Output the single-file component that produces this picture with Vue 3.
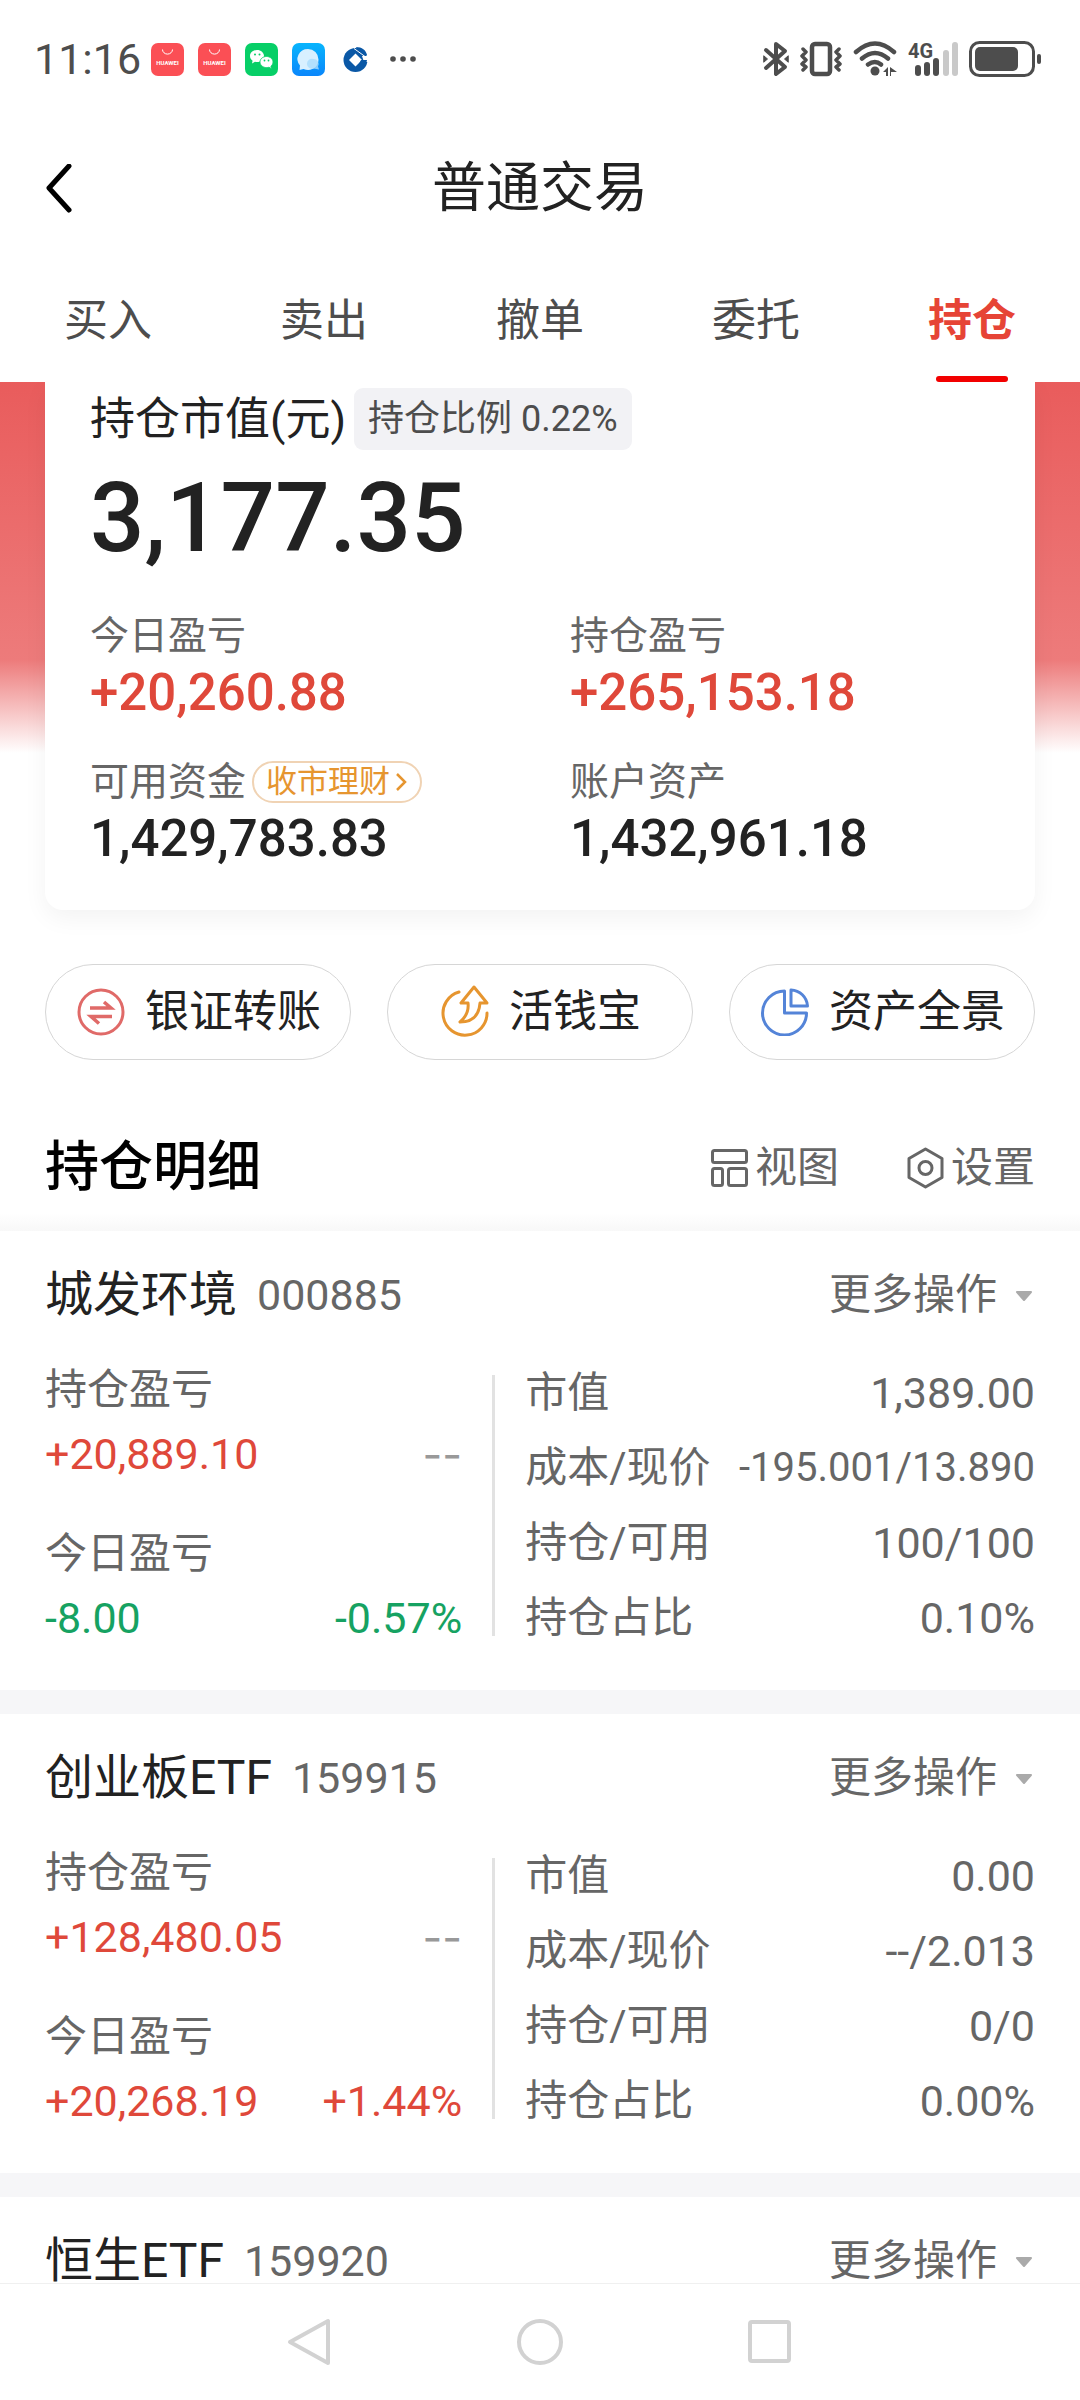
<template>
    <div class="page">
        <header class="header">
            <div class="status">
                <span class="status-time">11:16</span>
                <div class="status-apps">
                    <svg v-for="n in 2" :key="n" class="app-icon" viewBox="0 0 33 33">
                        <rect width="33" height="33" rx="7" fill="#fb4f55" />
                        <path d="M11.5 6.5a5 4.6 0 0 0 10 0" fill="none" stroke="#fff" stroke-width="1" />
                        <text x="16.5" y="21.5" text-anchor="middle" font-size="6" font-weight="700" fill="#fff">HUAWEI</text>
                    </svg>
                    <svg class="app-icon" viewBox="0 0 33 33">
                        <rect width="33" height="33" rx="7" fill="#07cf67" />
                        <path d="M12 7c-4 0-7 2.700-7 6 0 2 1 3.600 2.600 4.700L7 20.500l3-1.700c5 1 9-1.500 9-5.800 0-3.300-3-6-7-6z" fill="#fff" />
                        <path d="M21.500 13.500c-3.700 0-6.500 2.400-6.500 5.500s3 5.600 6.500 5.600c.9 0 1.700-.1 2.500-.4l2.400 1.500-.5-2.500c1.300-1 2.100-2.500 2.100-4.200 0-3.100-2.900-5.500-6.500-5.500z" fill="#fff" stroke="#07cf67" stroke-width="0.800" />
                        <g fill="#07cf67">
                            <circle cx="10" cy="11.500" r="1" />
                            <circle cx="14.500" cy="11.500" r="1" />
                            <circle cx="19.500" cy="17.500" r="0.900" />
                            <circle cx="23.500" cy="17.500" r="0.900" />
                        </g>
                    </svg>
                    <svg class="app-icon" viewBox="0 0 33 33">
                        <defs>
                            <linearGradient id="msgBg" x1="0" y1="0" x2="0" y2="1">
                                <stop offset="0" stop-color="#08b5fd" />
                                <stop offset="1" stop-color="#0a86fb" />
                            </linearGradient>
                        </defs>
                        <rect width="33" height="33" rx="7" fill="url(#msgBg)" />
                        <path d="M16 6a10.500 10 0 0 0-8 16.500l-.5 4.500 4-1c8 3 15-2 15-9.500a10.500 10.500 0 0 0-10.500-10.500z" fill="#d8f0ff" />
                        <path d="M21.500 16a5 5 0 1 0 0 9.500l5.500 1-1-3a5 5 0 0 0-4.500-7.500z" fill="#a9dcfd" opacity="0.800" />
                    </svg>
                    <svg class="app-icon" viewBox="0 0 33 33">
                        <circle cx="16.500" cy="17" r="12" fill="#0a58a6" />
                        <path d="M23 13h10v6h-8z" fill="#fff" />
                        <path d="M16.500 10.500l6.500 6.500-6.500 6.500-6.500-6.500z" fill="#fff" />
                        <path d="M17 4c6 0 10 3 11 8h-5l-4-4zM22 17h6l-1 4h-7z" fill="#0a58a6" />
                        <path d="M15 5.500l11 8" stroke="#fff" stroke-width="1" />
                    </svg>
                    <svg class="app-icon" viewBox="0 0 33 33" fill="#4d4d4d">
                        <circle cx="7" cy="16" r="2.800" />
                        <circle cx="17" cy="16" r="2.800" />
                        <circle cx="27" cy="16" r="2.800" />
                    </svg>
                </div>
                <div class="status-system">
                    <svg width="26" height="36" viewBox="0 0 26 36" fill="none" stroke="#4d4d4d" stroke-width="4" stroke-linejoin="round" stroke-linecap="round">
                        <path d="M3 9l19 17-9 7V3l9 7L3 27" />
                        <path d="M1 15l3.500 3-3.500 3zM25 15l-3.500 3 3.500 3z" stroke-width="1" fill="#4d4d4d" />
                    </svg>
                    <svg width="42" height="36" viewBox="0 0 42 36" fill="none" stroke="#4d4d4d" stroke-width="4.500" stroke-linejoin="round" stroke-linecap="round">
                        <rect x="12" y="3" width="18" height="30" rx="3" />
                        <path d="M3 8l3 3-4 4 4 4-4 4 4 3-3 3M39 8l-3 3 4 4-4 4 4 4-4 3 3 3" stroke-width="3.500" />
                    </svg>
                    <svg width="44" height="36" viewBox="0 0 44 36" fill="none" stroke="#4d4d4d" stroke-width="4.500" stroke-linecap="round">
                        <path d="M3 11q19-17 38 0M9 17.500q13-11 26 0M15 23.500q7-5 13 0" />
                        <circle cx="22" cy="30" r="4.500" fill="#4d4d4d" stroke="none" />
                        <path d="M30 31l5-5v9h-2v-4zM37 26v9h1v-4h6z" fill="#4d4d4d" stroke="none" />
                    </svg>
                    <svg class="signal" width="50" height="36" viewBox="0 0 50 36" fill="#4d4d4d">
                        <text x="0" y="17" font-size="20" font-weight="700">4G</text>
                        <rect x="7" y="24" width="6" height="11" rx="3" />
                        <rect x="16" y="21" width="6" height="14" rx="3" />
                        <rect x="25" y="17" width="6" height="18" rx="3" />
                        <rect x="35" y="9" width="6" height="26" rx="3" fill="#c9c9c9" />
                        <rect x="44" y="1" width="6" height="34" rx="3" fill="#c9c9c9" />
                    </svg>
                    <svg width="73" height="36" viewBox="0 0 73 36">
                        <rect x="1.500" y="1.500" width="63" height="33" rx="9" fill="none" stroke="#4d4d4d" stroke-width="3" />
                        <rect x="6" y="6" width="43" height="24" rx="5" fill="#4d4d4d" />
                        <rect x="68" y="13" width="4" height="10" rx="2" fill="#4d4d4d" />
                    </svg>
                </div>
            </div>
            <div class="title-bar">
                <button class="back" type="button" aria-label="返回">
                    <svg width="28" height="50" viewBox="0 0 28 50" fill="none" stroke="#000" stroke-width="5" stroke-linecap="round" stroke-linejoin="round">
                        <path d="M24 2L4 24l20 22" />
                    </svg>
                </button>
                <h1 class="title">普通交易</h1>
            </div>
            <nav class="tabs">
                <button v-for="tab in tabs" :key="tab" type="button" class="tab" :class="{ active: tab === activeTab }"
                    @click="activeTab = tab">{{ tab }}</button>
            </nav>
        </header>

        <main class="content">
            <section class="hero">
                <div class="summary">
                    <div class="summary-head">
                        <span class="summary-title">持仓市值(元)</span>
                        <span class="ratio">持仓比例 0.22%</span>
                    </div>
                    <div class="total">3,177.35</div>
                    <dl class="stats">
                        <div v-for="stat in stats" :key="stat.label">
                            <dt class="stat-label">
                                {{ stat.label }}
                                <a v-if="stat.link" class="badge" href="#">{{ stat.link }}
                                    <svg width="12" height="20" viewBox="0 0 12 20" fill="none" stroke="currentColor" stroke-width="2.500">
                                        <path d="M1 2l8 8-8 8" />
                                    </svg>
                                </a>
                            </dt>
                            <dd class="stat-value" :class="trend(stat.value)">{{ stat.value }}</dd>
                        </div>
                    </dl>
                </div>
            </section>

            <section class="actions">
                <button class="action" type="button">
                    <svg width="48" height="48" viewBox="0 0 48 48" fill="none" stroke="#e06a68" stroke-width="3">
                        <circle cx="24" cy="24" r="22" />
                        <path d="M13 20h21l-7-6M35 28.500H14l8 7" stroke-width="3.500" />
                    </svg>
                    <span>银证转账</span>
                </button>
                <button class="action" type="button">
                    <svg width="48" height="54" viewBox="0 0 48 54" fill="none" stroke="#e6952f" stroke-width="3" stroke-linecap="round" stroke-linejoin="round">
                        <path d="M18 7a22 22 0 1 0 28 21" />
                        <path d="M33 2L20 18h7c1 8-2 14-8 19 12 0 19-6 20-19h7z" />
                    </svg>
                    <span>活钱宝</span>
                </button>
                <button class="action" type="button">
                    <svg width="48" height="48" viewBox="0 0 48 48" fill="none" stroke="#5484d8" stroke-width="3" stroke-linejoin="round">
                        <path d="M23.500 3a22 22 0 1 0 22 22h-22z" />
                        <path d="M30 2v16h16.500A17 17 0 0 0 30 2z" />
                    </svg>
                    <span>资产全景</span>
                </button>
            </section>

            <section class="detail-head">
                <h2 class="detail-title">持仓明细</h2>
                <button class="tool" type="button">
                    <svg width="37" height="40" viewBox="0 0 37 40" fill="none" stroke="#666" stroke-width="3">
                        <rect x="1.500" y="2.500" width="34" height="12" rx="2" />
                        <rect x="1.500" y="20.500" width="10" height="17" rx="2" />
                        <rect x="17.500" y="20.500" width="18" height="17" rx="2" />
                    </svg>
                    <span>视图</span>
                </button>
                <button class="tool" type="button">
                    <svg width="37" height="42" viewBox="0 0 37 42" fill="none" stroke="#666" stroke-width="3" stroke-linejoin="round">
                        <path d="M18.500 2l16.500 9.500v19L18.500 40 2 30.500v-19z" />
                        <circle cx="18.500" cy="21" r="6.500" />
                    </svg>
                    <span>设置</span>
                </button>
            </section>

            <article v-for="item in holdings" :key="item.code" class="holding">
                <div class="holding-head">
                    <h3 class="name">{{ item.name }}</h3>
                    <span class="code">{{ item.code }}</span>
                    <button class="more" type="button">
                        <span>更多操作</span>
                        <svg width="20" height="16" viewBox="0 0 20 16">
                            <path d="M2 5h14l-7 8z" fill="#aaa" stroke="#aaa" stroke-width="2" stroke-linejoin="round" />
                        </svg>
                    </button>
                </div>
                <div v-if="item.rows" class="holding-body">
                    <dl class="profit">
                        <template v-for="p in item.profit" :key="p.label">
                            <dt>{{ p.label }}</dt>
                            <dd :class="trend(p.value)">
                                <span>{{ p.value }}</span>
                                <span :class="{ empty: p.rate === '--' }">{{ p.rate }}</span>
                            </dd>
                        </template>
                    </dl>
                    <div class="divider"></div>
                    <dl class="rows">
                        <div v-for="row in item.rows" :key="row.label" class="row">
                            <dt>{{ row.label }}</dt>
                            <dd :class="{ long: row.value.length > 12 }">{{ row.value }}</dd>
                        </div>
                    </dl>
                </div>
            </article>
        </main>

        <footer class="nav">
            <button type="button" aria-label="返回">
                <svg width="48" height="48" viewBox="0 0 48 48"><path d="M42 3v42L4 24z" /></svg>
            </button>
            <button type="button" aria-label="主页">
                <svg width="48" height="48" viewBox="0 0 48 48"><circle cx="24" cy="24" r="21" /></svg>
            </button>
            <button type="button" aria-label="最近任务">
                <svg width="48" height="48" viewBox="0 0 48 48"><rect x="4" y="4" width="39" height="39" rx="2" /></svg>
            </button>
        </footer>
    </div>
</template>

<script setup>
import { ref } from 'vue';

const tabs = ['买入', '卖出', '撤单', '委托', '持仓'];
const activeTab = ref('持仓');

const stats = [
    { label: '今日盈亏', value: '+20,260.88' },
    { label: '持仓盈亏', value: '+265,153.18' },
    { label: '可用资金', value: '1,429,783.83', link: '收市理财' },
    { label: '账户资产', value: '1,432,961.18' }
];

const holdings = [
    {
        name: '城发环境',
        code: '000885',
        profit: [
            { label: '持仓盈亏', value: '+20,889.10', rate: '--' },
            { label: '今日盈亏', value: '-8.00', rate: '-0.57%' }
        ],
        rows: [
            { label: '市值', value: '1,389.00' },
            { label: '成本/现价', value: '-195.001/13.890' },
            { label: '持仓/可用', value: '100/100' },
            { label: '持仓占比', value: '0.10%' }
        ]
    },
    {
        name: '创业板ETF',
        code: '159915',
        profit: [
            { label: '持仓盈亏', value: '+128,480.05', rate: '--' },
            { label: '今日盈亏', value: '+20,268.19', rate: '+1.44%' }
        ],
        rows: [
            { label: '市值', value: '0.00' },
            { label: '成本/现价', value: '--/2.013' },
            { label: '持仓/可用', value: '0/0' },
            { label: '持仓占比', value: '0.00%' }
        ]
    },
    { name: '恒生ETF', code: '159920' }
];

// red for gains, green for losses
function trend(value) {
    if (value.startsWith('+')) return 'up';
    if (value.startsWith('-')) return 'down';
    return '';
}
</script>

<style>
body {
    margin: 0;
    background: #fff;
}
</style>

<style scoped>
.page {
    display: flex;
    flex-direction: column;
    height: 100vh;
    overflow: hidden;
    color: #222;
    font-family: Roboto, "Noto Sans CJK SC", sans-serif;
    font-size: 42px;
    line-height: 1;
}

button {
    padding: 0;
    border: 0;
    background: none;
    color: inherit;
    font: inherit;
    cursor: pointer;
}

h1,
h2,
h3,
dl,
dd {
    margin: 0;
}

svg {
    display: block;
    flex: none;
}

.header {
    flex: none;
}

.status {
    display: flex;
    align-items: center;
    height: 118px;
    padding: 0 38px 0 34px;
    color: #4d4d4d;
}

.status-time {
    font-size: 43px;
}

.status-apps {
    display: flex;
    gap: 14px;
    margin-left: 10px;
}

.app-icon {
    width: 33px;
    height: 33px;
}

.status-system {
    display: flex;
    align-items: center;
    gap: 11px;
    margin-left: auto;
}

.signal {
    overflow: visible;
}

.title-bar {
    display: grid;
    grid-template-columns: 1fr auto 1fr;
    align-items: center;
    height: 142px;
    padding: 0 45px;
}

.back {
    justify-self: start;
}

.title {
    font-size: 54px;
    font-weight: 400;
}

.tabs {
    display: flex;
    height: 122px;
}

.tab {
    position: relative;
    flex: 1;
    color: #4d4d4d;
    font-size: 44px;
}

.tab.active {
    color: #e64436;
    font-weight: 700;
}

.tab.active::after {
    content: '';
    position: absolute;
    bottom: 0;
    left: 50%;
    width: 72px;
    height: 6px;
    margin-left: -36px;
    border-radius: 3px;
    background: #f20000;
}

.content {
    flex: 1;
    min-height: 0;
    overflow: hidden;
}

.hero {
    padding: 0 45px;
    background: linear-gradient(#e95c5c, #ed7b7b 278px, #fff 371px);
}

.summary {
    padding: 6px 45px 38px;
    border-radius: 0 0 18px 18px;
    background: #fff;
    box-shadow: 0 8px 24px rgba(0, 0, 0, 0.05);
}

.summary-head {
    display: flex;
    align-items: center;
    gap: 8px;
    height: 62px;
}

.summary-title {
    font-size: 45px;
}

.ratio {
    padding: 0 14px;
    border-radius: 9px;
    background: #f2f2f5;
    color: #4d4d4d;
    font-size: 36px;
    line-height: 62px;
}

.total {
    margin-top: 18px;
    font-size: 96px;
    font-weight: 500;
    line-height: 100px;
}

.stats {
    display: grid;
    grid-template-columns: 1fr 1fr;
    gap: 32px 60px;
    margin-top: 44px;
}

.stat-label {
    display: flex;
    align-items: center;
    gap: 6px;
    height: 48px;
    color: #666;
    font-size: 39px;
}

.stat-value {
    font-size: 51px;
    font-weight: 500;
    line-height: 66px;
}

.badge {
    display: flex;
    align-items: center;
    gap: 6px;
    padding: 0 12px;
    border: 2px solid #f0d3b4;
    border-radius: 21px;
    color: #e6952f;
    font-size: 31px;
    line-height: 38px;
    text-decoration: none;
}

.up {
    color: #df483a;
}

.down {
    color: #16a262;
}

.actions {
    display: grid;
    grid-template-columns: repeat(3, 1fr);
    gap: 36px;
    padding: 54px 45px 0;
}

.action {
    display: flex;
    align-items: center;
    justify-content: center;
    gap: 20px;
    height: 96px;
    padding-left: 2px;
    border: 1px solid #d6d6d6;
    border-radius: 48px;
    font-size: 44px;
}

.detail-head {
    display: flex;
    align-items: center;
    gap: 68px;
    height: 127px;
    padding: 44px 45px 0;
    background: linear-gradient(to top, #f8f8f8, #fff 18px);
}

.detail-title {
    margin-right: auto;
    color: #000;
    font-size: 54px;
    font-weight: 500;
}

.tool {
    display: flex;
    align-items: center;
    gap: 7px;
    color: #666;
}

.holding {
    padding: 32px 45px 42px;
}

.holding + .holding {
    border-top: 24px solid #f6f6f8;
}

.holding-head {
    display: flex;
    align-items: center;
    height: 64px;
}

.name {
    font-size: 48px;
    font-weight: 400;
}

.code {
    margin-left: 20px;
    color: #666;
    font-size: 43px;
}

.more {
    display: flex;
    align-items: center;
    gap: 18px;
    margin-left: auto;
    color: #666;
}

.holding-body {
    display: grid;
    grid-template-columns: minmax(0, 9fr) 3px minmax(0, 11fr);
    column-gap: 30px;
    margin-top: 39px;
}

.profit dt {
    color: #666;
    line-height: 48px;
}

.profit dd {
    display: flex;
    justify-content: space-between;
    margin-top: 10px;
    font-size: 43px;
    line-height: 60px;
}

.profit dd + dt {
    margin-top: 46px;
}

.empty {
    color: #999;
    font-family: Inter, sans-serif;
}

.divider {
    margin: 9px 0 12px;
    background: #e2e2e2;
}

.rows {
    display: flex;
    flex-direction: column;
    gap: 21px;
}

.row {
    display: flex;
    justify-content: space-between;
    color: #666;
    line-height: 54px;
}

.row dd {
    font-size: 43px;
}

.row .long {
    font-size: 40px;
}

.nav {
    display: flex;
    flex: none;
    align-items: center;
    justify-content: center;
    gap: 182px;
    height: 116px;
    border-top: 1px solid #f0f0f0;
}

.nav svg {
    fill: none;
    stroke: #d2d2d2;
    stroke-width: 4px;
    stroke-linejoin: round;
}
</style>
